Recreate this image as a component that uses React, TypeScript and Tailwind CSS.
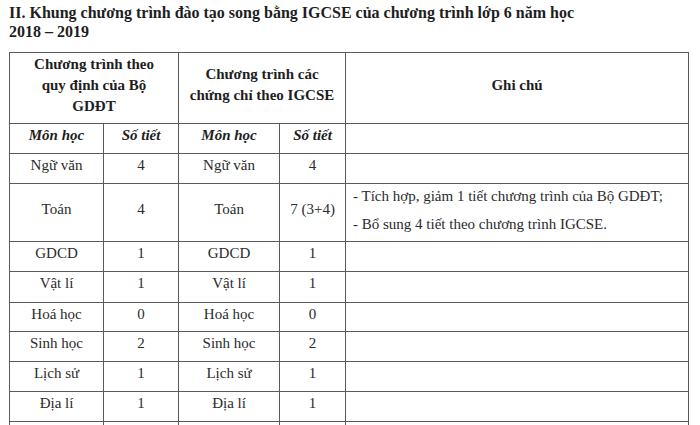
const subjects = [
  { name: "Ngữ văn", a: "4", b: "4", h: "h-[30px]" },
  { name: "Toán", a: "4", b: "7 (3+4)", h: "h-[58px]", note: true },
  { name: "GDCD", a: "1", b: "1", h: "h-[29px]" },
  { name: "Vật lí", a: "1", b: "1", h: "h-[31px]" },
  { name: "Hoá học", a: "0", b: "0", h: "h-[29px]" },
  { name: "Sinh học", a: "2", b: "2", h: "h-[29px]" },
  { name: "Lịch sử", a: "1", b: "1", h: "h-[30px]" },
  { name: "Địa lí", a: "1", b: "1", h: "h-[30px]" },
  { name: "Âm nhạc", a: "1", b: "1", h: "h-[30px]" },
];

const cell = "border border-[#5a5a5a] pb-[6px] pt-0 text-center";

export default function App() {
  return (
    <div className="h-[425px] overflow-hidden bg-white pt-[3px] font-['Liberation_Serif','Times_New_Roman',serif] text-[#2b2b2b]">
      <h2 className="ml-[9px] text-[16px] font-bold leading-[19px] text-[#1e1e1e]">
        II. Khung chương trình đào tạo song bằng IGCSE của chương trình lớp 6 năm học
        <br />
        2018 – 2019
      </h2>

      <table className="ml-[9px] mt-[11px] w-[679px] table-fixed border-collapse font-['Liberation_Serif','Times_New_Roman',serif] text-[15px] text-[#2b2b2b]">
        <colgroup>
          <col className="w-[94px]" />
          <col className="w-[75px]" />
          <col className="w-[101px]" />
          <col className="w-[66px]" />
          <col className="w-[343px]" />
        </colgroup>
        <thead>
          <tr className="h-[71px] font-bold text-[#1e1e1e]">
            <th colSpan={2} className={`${cell} px-2 leading-[21px]`}>
              Chương trình theo
              <br />
              quy định của Bộ
              <br />
              GDĐT
            </th>
            <th colSpan={2} className={`${cell} px-1 leading-[21px]`}>
              Chương trình các
              <br />
              chứng chỉ theo IGCSE
            </th>
            <th className={cell}>Ghi chú</th>
          </tr>
          <tr className="h-[30px] font-bold italic text-[#1e1e1e]">
            <th className={cell}>Môn học</th>
            <th className={cell}>Số tiết</th>
            <th className={cell}>Môn học</th>
            <th className={cell}>Số tiết</th>
            <th className={cell}></th>
          </tr>
        </thead>
        <tbody>
          {subjects.map((s) => (
            <tr key={s.name} className={s.h}>
              <td className={cell}>{s.name}</td>
              <td className={cell}>{s.a}</td>
              <td className={cell}>{s.name}</td>
              <td className={cell}>{s.b}</td>
              <td className="border border-[#5a5a5a] px-[7px] pb-[5px] pt-0">
                {s.note && (
                  <div className="flex flex-col gap-[10px] leading-[18px]">
                    <p>- Tích hợp, giảm 1 tiết chương trình của Bộ GDĐT;</p>
                    <p>- Bổ sung 4 tiết theo chương trình IGCSE.</p>
                  </div>
                )}
              </td>
            </tr>
          ))}
        </tbody>
      </table>
    </div>
  );
}
